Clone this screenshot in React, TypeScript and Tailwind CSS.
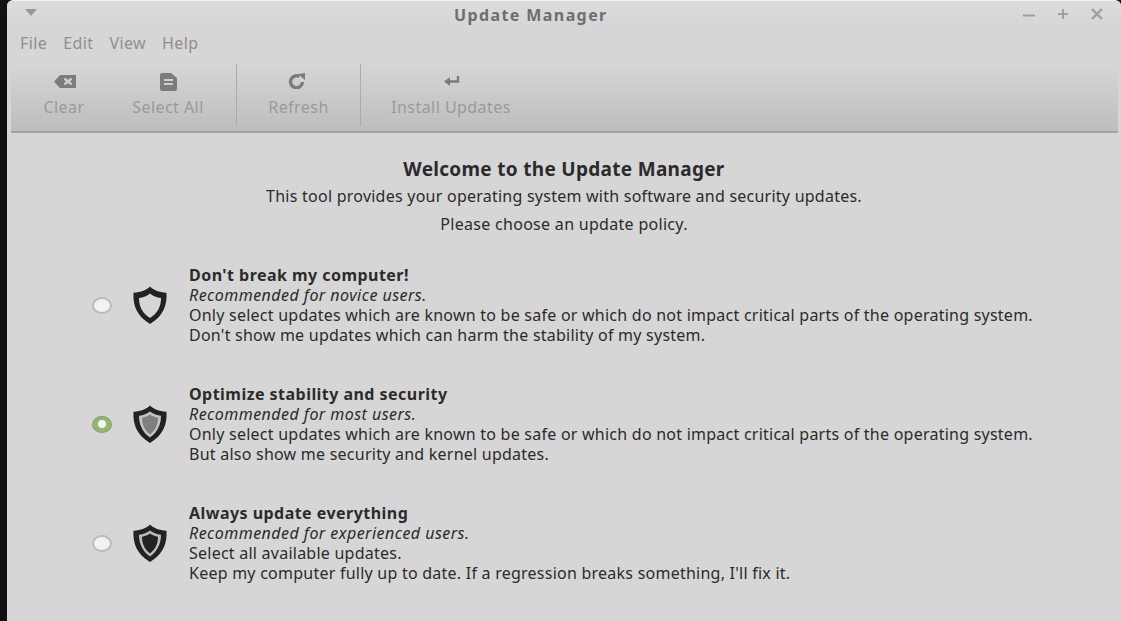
function Shield({ variant }: { variant: "open" | "grey" | "dark" }) {
  return (
    <svg width="36" height="38" viewBox="0 0 36 38" className="shrink-0">
      <path
        d="M18 0.5C15 3.8 9 6.2 1.5 6.8C0.8 19 4.5 30 18 38C31.5 30 35.2 19 34.5 6.8C27 6.2 21 3.8 18 0.5Z"
        fill="#222222"
      />
      {variant === "open" && (
        <path d="M18 7.5C15 10 11.5 11.4 7 12C7 20 10 27 18 32C26 27 29 20 29 12C24.5 11.4 21 10 18 7.5Z" fill="#d6d6d6" />
      )}
      {variant === "grey" && (
        <>
          <path d="M18 6.5C15 8.8 11.5 10.2 7 10.8C7 19 10 27 18 32.5C26 27 29 19 29 10.8C24.5 10.2 21 8.8 18 6.5Z" fill="#c4c4c4" />
          <path d="M18 9.5C15.5 11.2 13 12.2 10 12.8C10 19.5 12.5 25.5 18 29.5C23.5 25.5 26 19.5 26 12.8C23 12.2 20.5 11.2 18 9.5Z" fill="#7f7f7f" />
        </>
      )}
      {variant === "dark" && (
        <>
          <path d="M18 6.5C15 8.8 11.5 10.2 7 10.8C7 19 10 27 18 32.5C26 27 29 19 29 10.8C24.5 10.2 21 8.8 18 6.5Z" fill="#bdbdbd" />
          <path d="M18 9.5C15.5 11.2 13 12.2 10 12.8C10 19.5 12.5 25.5 18 29.5C23.5 25.5 26 19.5 26 12.8C23 12.2 20.5 11.2 18 9.5Z" fill="#222222" />
        </>
      )}
    </svg>
  );
}

function Radio({ checked }: { checked?: boolean }) {
  if (checked) {
    return (
      <div className="w-[20px] h-[17px] mt-[2px] rounded-[50%] bg-[#8fb96b] border border-[#8a9a80] flex items-center justify-center shrink-0">
        <div className="w-[8px] h-[8px] rounded-full bg-[#f4f4f4]"></div>
      </div>
    );
  }
  return <div className="w-[20px] h-[17px] mt-[2px] rounded-[50%] bg-[#f2f2f2] border-2 border-[#bcbcbc] shrink-0"></div>;
}

function Policy({
  title,
  sub,
  line1,
  line2,
  shield,
  checked,
}: {
  title: string;
  sub: string;
  line1: string;
  line2: string;
  shield: "open" | "grey" | "dark";
  checked?: boolean;
}) {
  return (
    <div className="flex items-center h-[80px] pl-[85px] mb-[39px]">
      <Radio checked={checked} />
      <div className="ml-[20px] mr-[21px] flex mt-[2px]">
        <Shield variant={shield} />
      </div>
      <div className="text-[16px] leading-[20px] tracking-[0.24px] text-[#2b2b2b] whitespace-nowrap mt-[2px]">
        <div className="font-bold tracking-[0.46px]">{title}</div>
        <div className="italic tracking-[0.46px]">{sub}</div>
        <div>{line1}</div>
        <div>{line2}</div>
      </div>
    </div>
  );
}

function ToolButton({ label, icon, w }: { label: string; icon: React.ReactNode; w: string }) {
  return (
    <div className={`flex flex-col items-center ${w}`}>
      <div className="h-[24px] flex items-center justify-center">{icon}</div>
      <div className="text-[16px] leading-[20px] tracking-[0.45px] mt-[4px] text-[#9a9a9a] whitespace-nowrap">{label}</div>
    </div>
  );
}

const MENU = ["File", "Edit", "View", "Help"];

export default function App() {
  return (
    <div className="w-[1121px] h-[621px] overflow-hidden bg-[#111111] font-['Noto_Sans','Open_Sans',sans-serif] flex">
      <div className="w-[7px] shrink-0"></div>
      <div className="w-[1114px] h-[621px] rounded-t-[6px] bg-[#d6d6d6] border-t border-[#efefef] flex flex-col overflow-hidden">
        <div className="h-[26px] shrink-0 flex items-center relative bg-gradient-to-b from-[#dcdcdc] to-[#d6d6d6]">
          <svg width="12" height="7" viewBox="0 0 12 7" className="ml-[18px] mb-[4px]">
            <path d="M0 0H12L6 7Z" fill="#999999" />
          </svg>
          <div className="absolute left-[447px] top-[4px] text-[16px] leading-[20px] font-bold tracking-[1.4px] text-[#6e6e6e]">Update Manager</div>
          <div className="ml-auto mr-[18px] flex items-center gap-[22px]">
            <svg width="12" height="12" viewBox="0 0 12 12"><path d="M0 7.5H12" stroke="#a0a0a0" strokeWidth="2" /></svg>
            <svg width="12" height="12" viewBox="0 0 12 12"><path d="M1 6H11M6 1V11" stroke="#a0a0a0" strokeWidth="2" /></svg>
            <svg width="12" height="12" viewBox="0 0 12 12"><path d="M1 1L11 11M11 1L1 11" stroke="#a0a0a0" strokeWidth="2.4" /></svg>
          </div>
        </div>
        <div className="h-[37px] shrink-0 flex items-center pl-[13px] pb-[6px] gap-[16px] text-[16px] tracking-[0.4px] text-[#8f8f8f]">
          {MENU.map((m) => (
            <span key={m}>{m}</span>
          ))}
        </div>
        <div className="h-[69px] shrink-0 ml-[4px] mr-[3px] flex bg-gradient-to-b from-[#d6d6d6] to-[#bdbdbd] border-b-2 border-[#a2a2a2]">
          <div className="flex pt-[5px] pl-[10px] w-[226px] h-[62px] border-r border-[#ababab]">
            <ToolButton
              w="w-[86px]"
              label="Clear"
              icon={
                <svg width="22" height="13" viewBox="0 0 22 14" preserveAspectRatio="none" className="ml-[2px]">
                  <path fillRule="evenodd" d="M6 0H22V14H6L0 7ZM10 3.5L12 3.5L14 5.5L16 3.5L18 3.5L18 5L16 7L18 9L18 10.5L16 10.5L14 8.5L12 10.5L10 10.5L10 9L12 7L10 5Z" fill="#7c7c7c" />
                </svg>
              }
            />
            <ToolButton
              w="w-[122px]"
              label="Select All"
              icon={
                <svg width="17" height="18" viewBox="0 0 17 18" className="mt-[1px]">
                  <path fillRule="evenodd" d="M2 0H11L17 5V16Q17 18 15 18H2Q0 18 0 16V2Q0 0 2 0ZM4 6V8H13V6ZM4 10V12H13V10Z" fill="#7c7c7c" />
                </svg>
              }
            />
          </div>
          <div className="flex pt-[5px] w-[124px] h-[62px] border-r border-[#ababab]">
            <ToolButton
              w="w-[123px]"
              label="Refresh"
              icon={
                <svg width="18" height="16" viewBox="0 0 18 16" className="mr-[3px]">
                  <path d="M14.5 9A6 6 0 1 1 11.5 3.5" fill="none" stroke="#7c7c7c" strokeWidth="3.4" />
                  <path d="M10 1L17 0L17 7Z" fill="#7c7c7c" />
                </svg>
              }
            />
          </div>
          <div className="flex pt-[5px] pl-[15px]">
            <ToolButton
              w="w-[150px]"
              label="Install Updates"
              icon={
                <svg width="16" height="12" viewBox="0 0 16 12" className="ml-[2px] mt-[1px]">
                  <path d="M14 0V5.5H4" fill="none" stroke="#7c7c7c" strokeWidth="2.4" />
                  <path d="M6 1L0 5.5L6 10Z" fill="#7c7c7c" />
                </svg>
              }
            />
          </div>
        </div>
        <div className="flex flex-col items-center text-[#2b2b2b] text-[16px] leading-[20px] tracking-[0.24px] shrink-0 pt-[25px] pb-[31px]">
          <div className="font-bold text-[19px] leading-[22px] tracking-[0.3px]">Welcome to the Update Manager</div>
          <div className="mt-[6px]">This tool provides your operating system with software and security updates.</div>
          <div className="mt-[8px] mb-[-1px] tracking-[0.3px]">Please choose an update policy.</div>
        </div>
        <Policy
          shield="open"
          title="Don't break my computer!"
          sub="Recommended for novice users."
          line1="Only select updates which are known to be safe or which do not impact critical parts of the operating system."
          line2="Don't show me updates which can harm the stability of my system."
        />
        <Policy
          shield="grey"
          checked
          title="Optimize stability and security"
          sub="Recommended for most users."
          line1="Only select updates which are known to be safe or which do not impact critical parts of the operating system."
          line2="But also show me security and kernel updates."
        />
        <Policy
          shield="dark"
          title="Always update everything"
          sub="Recommended for experienced users."
          line1="Select all available updates."
          line2="Keep my computer fully up to date. If a regression breaks something, I'll fix it."
        />
      </div>
    </div>
  );
}
